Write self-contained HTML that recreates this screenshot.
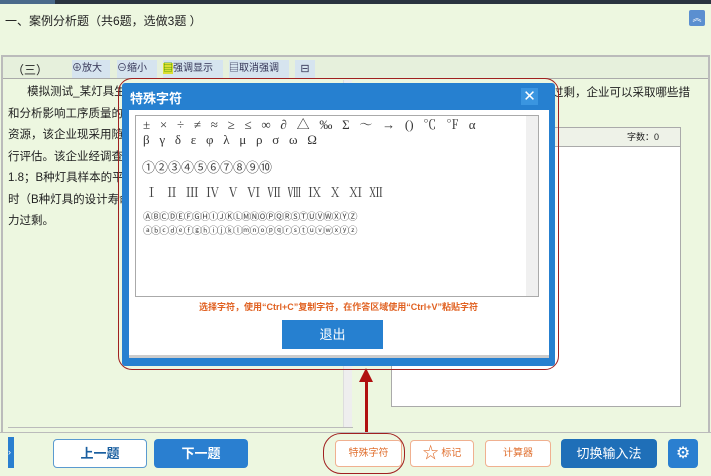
<!DOCTYPE html><html><head><meta charset="utf-8"><style>
*{margin:0;padding:0;box-sizing:border-box}
body{width:711px;height:476px;overflow:hidden;background:#edf7e0;font-family:"Liberation Sans","Noto Sans CJK SC",sans-serif;position:relative;font-size:12px;color:#222}
.a{position:absolute}
.btn{position:absolute;border-radius:4px;text-align:center;font-size:13px}
</style></head><body>
<div class="a" style="left:0;top:0;width:711px;height:4px;background:#2a3440"></div>
<div class="a" style="left:0;top:0;width:55px;height:4px;background:#4a6a8a"></div>
<div class="a" style="left:5px;top:12px;font-size:12px">一、案例分析题（共6题，选做3题 ）</div>
<div class="a" style="left:689px;top:10px;width:16px;height:16px;background:#5b8fd0;border-radius:2px;color:#fff;font-size:9px;text-align:center;line-height:16px">︽</div>
<div class="a" style="left:1px;top:55px;width:709px;height:377px;border:2px solid #bbb;border-bottom:none"></div>
<div class="a" style="left:3px;top:57px;width:705px;height:22px;background:#e6f0dc;border-bottom:1px solid #aaa"></div>
<div class="a" style="left:12px;top:61px;font-size:12px">（三）</div>
<div class="a" style="left:72px;top:60px;width:38px;height:18px;background:#d6e4ef;font-size:10px;line-height:18px;color:#335">⊕放大</div>
<div class="a" style="left:117px;top:60px;width:40px;height:18px;background:#d6e4ef;font-size:10px;line-height:18px;color:#335">⊖缩小</div>
<div class="a" style="left:163px;top:60px;width:60px;height:18px;background:#d6e4ef;font-size:10px;line-height:18px;color:#335"><span style="color:#390;background:#dd3">▤</span>强调显示</div>
<div class="a" style="left:229px;top:60px;width:60px;height:18px;background:#d6e4ef;font-size:10px;line-height:18px;color:#335">▤取消强调</div>
<div class="a" style="left:295px;top:60px;width:20px;height:18px;background:#d6e4ef;font-size:11px;line-height:18px;color:#335;text-align:center">⊟</div>
<div class="a" style="left:8px;top:82px;width:340px;font-size:11.5px;line-height:21.5px">&nbsp;&nbsp;&nbsp;&nbsp;&nbsp;&nbsp;模拟测试_某灯具生<br>和分析影响工序质量的<br>资源，该企业现采用随<br>行评估。该企业经调查<br>1.8；B种灯具样本的平<br>时（B种灯具的设计寿命<br>力过剩。</div>
<div class="a" style="left:552px;top:84px;font-size:11.5px">过剩，企业可以采取哪些措</div>
<div class="a" style="left:343px;top:80px;width:9px;height:347px;background:#eee;border-left:1px solid #ddd"></div>
<div class="a" style="left:8px;top:427px;width:345px;height:1px;background:#bbb"></div>
<div class="a" style="left:391px;top:127px;width:290px;height:280px;background:#fff;border:1px solid #aaa"></div>
<div class="a" style="left:391px;top:127px;width:290px;height:20px;background:#eef2e8;border:1px solid #aaa;font-size:9px;line-height:18px;padding-left:235px">字数：0</div>
<div class="a" style="left:0;top:432px;width:711px;height:44px;background:#edf7e0;border-top:1px solid #bbb"></div>
<div class="a" style="left:8px;top:437px;width:6px;height:31px;background:#2a7fd0;color:#fff;font-size:9px;line-height:31px">›</div>
<div class="btn" style="left:53px;top:439px;width:94px;height:29px;background:#fff;border:1px solid #5a9ad0;color:#1a5fa0;font-weight:bold;line-height:27px">上一题</div>
<div class="btn" style="left:154px;top:439px;width:94px;height:29px;background:#2a7fd0;color:#fff;font-weight:bold;line-height:29px">下一题</div>
<div class="btn" style="left:335px;top:440px;width:67px;height:27px;background:#fff;border:1px solid #f0b090;color:#e07030;font-size:10px;line-height:25px">特殊字符</div>
<div class="a" style="left:323px;top:433px;width:82px;height:41px;border:1.5px solid #a02020;border-radius:18px"></div>
<div class="btn" style="left:410px;top:440px;width:64px;height:27px;background:#fff;border:1px solid #f0b090;color:#e07030;font-size:10px;line-height:25px"><span style="font-size:16px;vertical-align:-2px">☆</span> 标记</div>
<div class="btn" style="left:485px;top:440px;width:66px;height:27px;background:#fff;border:1px solid #f0b090;color:#e07030;font-size:10px;line-height:25px">计算器</div>
<div class="btn" style="left:561px;top:439px;width:96px;height:29px;background:#1f6fb8;color:#fff;line-height:29px">切换输入法</div>
<div class="btn" style="left:668px;top:439px;width:30px;height:29px;background:#2a7fd0;color:#fff;line-height:29px;font-size:16px">⚙</div>
<div class="a" style="left:365px;top:378px;width:3px;height:54px;background:#b01010"></div>
<div class="a" style="left:359px;top:368px;width:0;height:0;border-left:7.5px solid transparent;border-right:7.5px solid transparent;border-bottom:14px solid #b01010"></div>
<div class="a" style="left:118px;top:78px;width:441px;height:292px;border:1.5px solid #a02020;border-radius:14px"></div>
<div class="a" style="left:122px;top:83px;width:433px;height:283px;background:#2680d0;border-radius:3px"></div>
<div class="a" style="left:130px;top:88px;color:#fff;font-size:13px;font-weight:bold">特殊字符</div>
<div class="a" style="left:521px;top:88px;width:17px;height:17px;background:#3a95e0;color:#fff;font-size:15px;line-height:17px;text-align:center">✕</div>
<div class="a" style="left:129px;top:110px;width:420px;height:248px;background:#fff;border-bottom:3px solid #ccc"></div>
<div class="a" style="left:135px;top:115px;width:404px;height:182px;border:1px solid #aaa;background:#fff"></div>
<div class="a" style="left:526px;top:116px;width:12px;height:180px;background:#f0f0f0"></div>
<div class="a" style="left:143px;top:117px;font-family:'Liberation Serif','Noto Serif CJK SC',serif;font-size:13px;line-height:15px;color:#333;white-space:pre">±   ×   ÷   ≠   ≈   ≥   ≤   ∞   ∂   △   ‰   Σ   ～   →   ()   ℃   ℉   α
β   γ   δ   ε   φ   λ   μ   ρ   σ   ω   Ω</div>
<div class="a" style="left:142px;top:157px;font-size:13px;color:#444;font-family:'Noto Sans CJK SC',sans-serif">①②③④⑤⑥⑦⑧⑨⑩</div>
<div class="a" style="left:145px;top:182px;font-size:13px;color:#444;font-family:'Liberation Serif','Noto Serif CJK SC',serif;white-space:pre;letter-spacing:0.3px">Ⅰ  Ⅱ  Ⅲ  Ⅳ  Ⅴ  Ⅵ  Ⅶ  Ⅷ  Ⅸ  Ⅹ  Ⅺ  Ⅻ</div>
<div class="a" style="left:143px;top:211px;font-size:9.5px;line-height:14px;color:#444;font-family:'DejaVu Sans',sans-serif;letter-spacing:-1.3px">ⒶⒷⒸⒹⒺⒻⒼⒽⒾⒿⓀⓁⓂⓃⓄⓅⓆⓇⓈⓉⓊⓋⓌⓍⓎⓏ<br>ⓐⓑⓒⓓⓔⓕⓖⓗⓘⓙⓚⓛⓜⓝⓞⓟⓠⓡⓢⓣⓤⓥⓦⓧⓨⓩ</div>
<div class="a" style="left:120px;top:300px;width:437px;text-align:center;color:#e06020;font-size:9px;font-weight:bold">选择字符，使用“Ctrl+C”复制字符，在作答区域使用“Ctrl+V”粘贴字符</div>
<div class="a" style="left:282px;top:320px;width:101px;height:29px;background:#2680d0;color:#fff;text-align:center;line-height:29px;font-size:13px">退出</div>
</body></html>
